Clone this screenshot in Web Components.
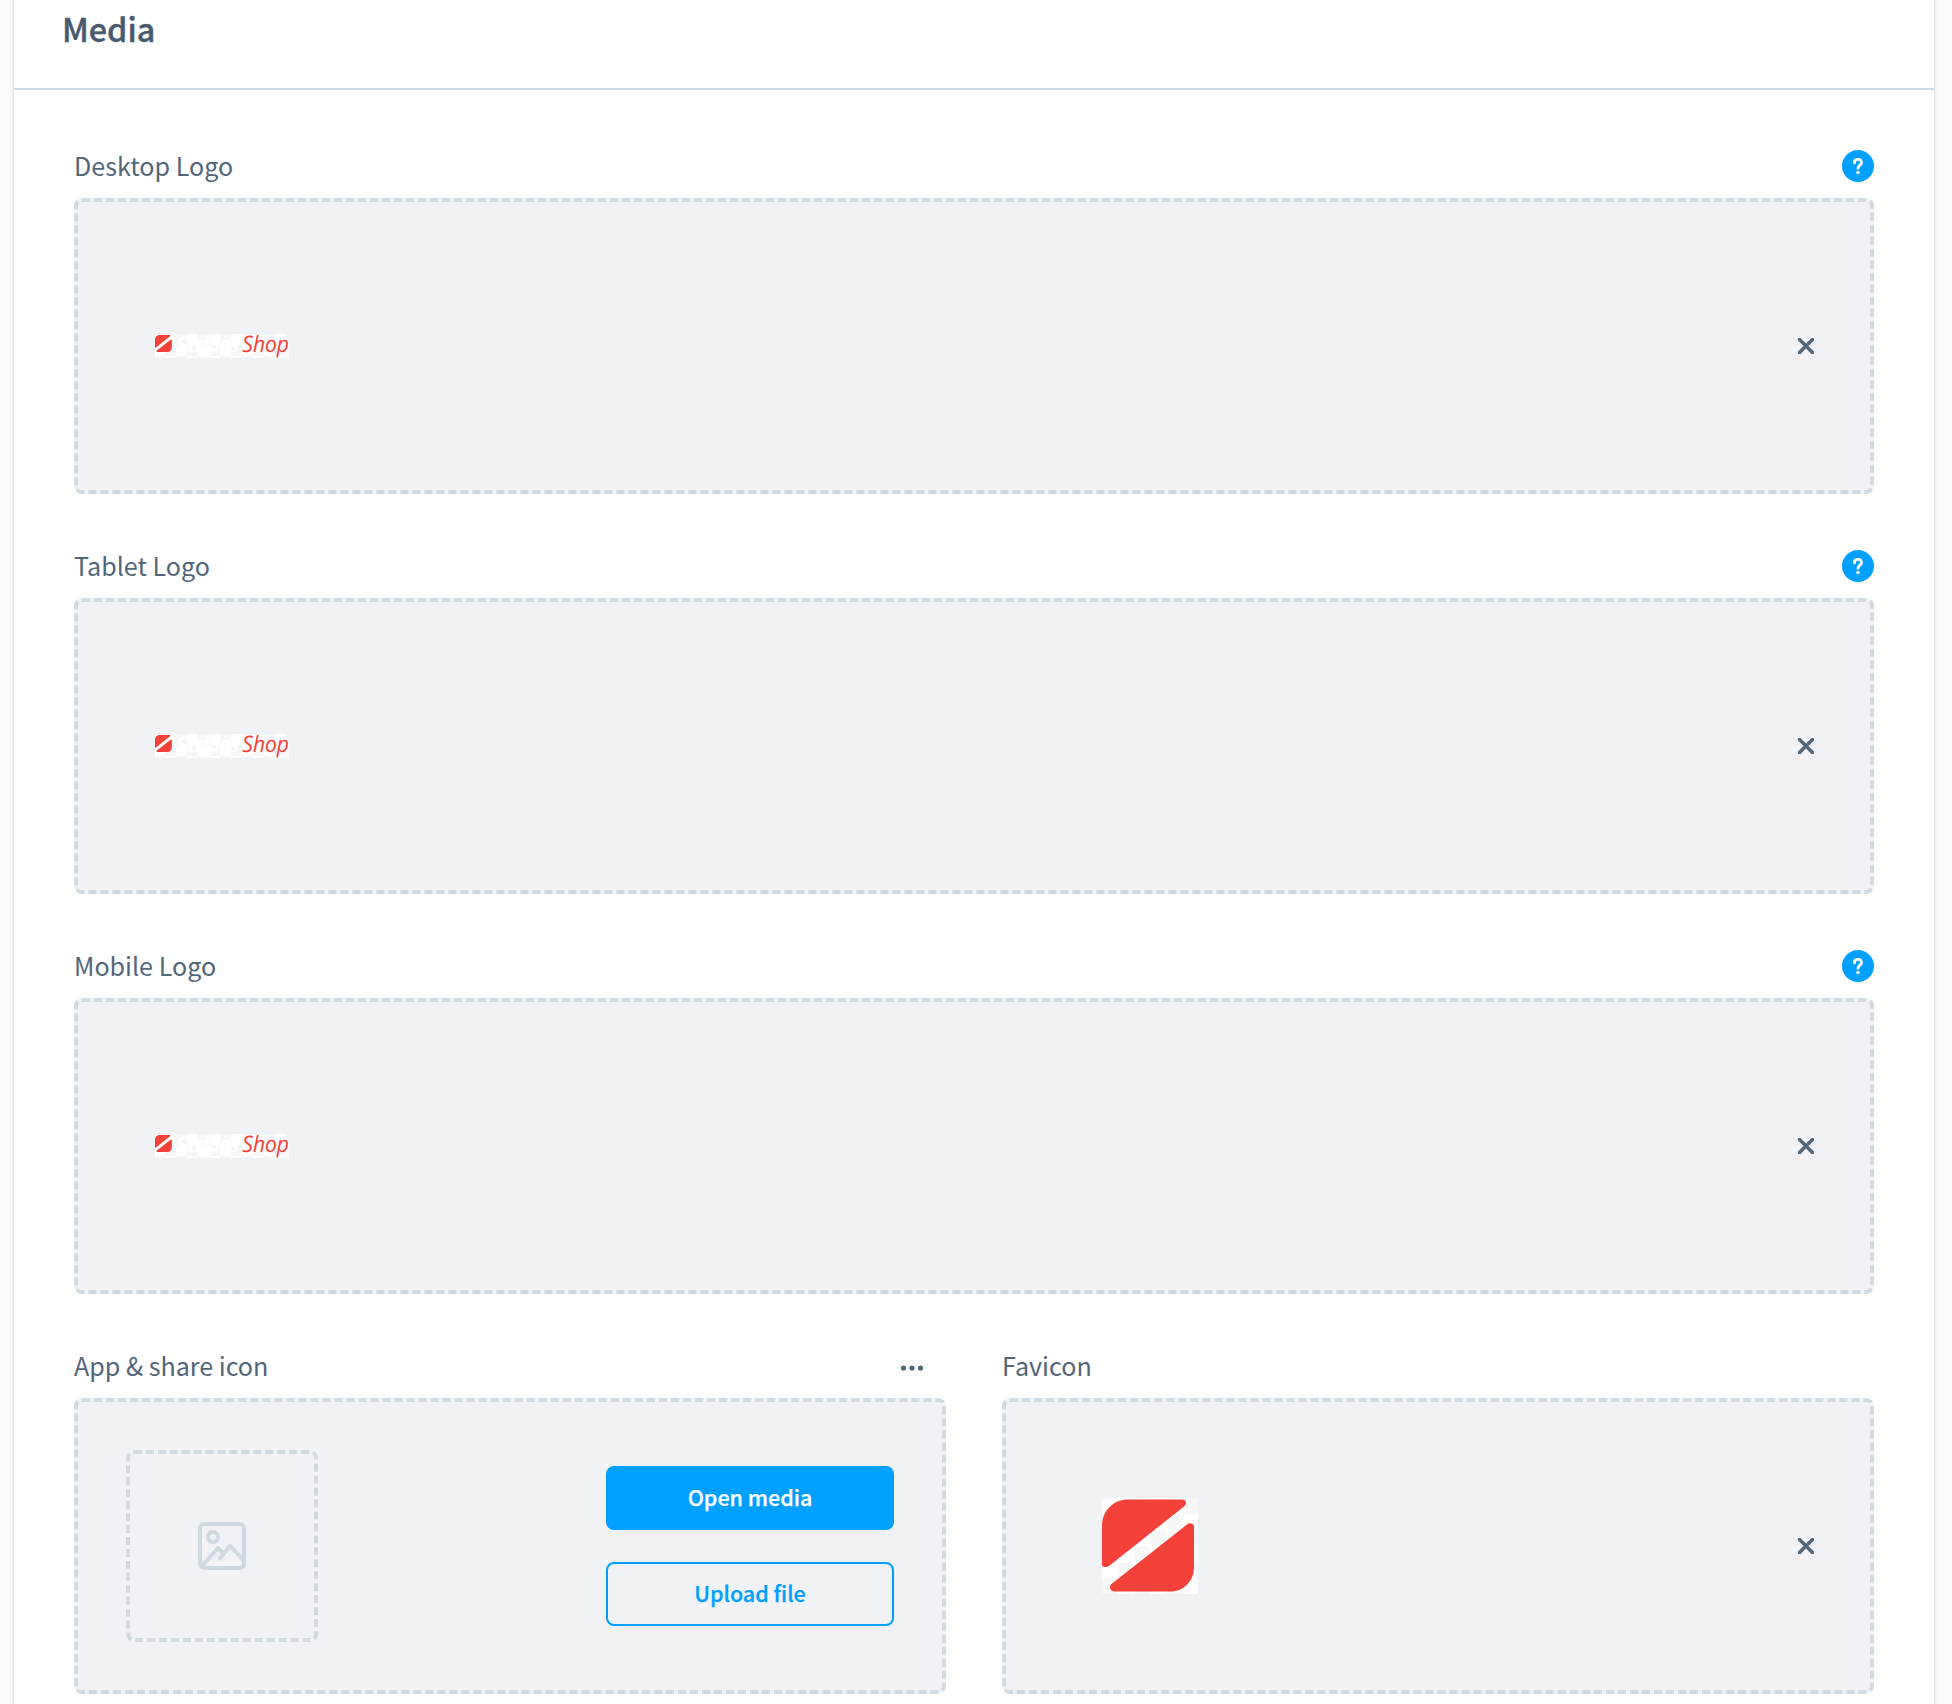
<!DOCTYPE html>
<html lang="en">
<head>
<meta charset="utf-8">
<title>Media</title>
<style>
html{height:1704px;overflow:hidden;background:#f9fafb}
body{margin:0;display:flow-root;font-family:"Noto Sans CJK JP","Noto Sans CJK SC",sans-serif;color:#52667a}
</style>
</head>
<body>
<media-card heading="Media">
  <media-field label="Desktop Logo" help><shop-logo></shop-logo></media-field>
  <media-field label="Tablet Logo" help><shop-logo></shop-logo></media-field>
  <media-field label="Mobile Logo" help><shop-logo></shop-logo></media-field>
  <field-row>
    <media-field label="App &amp; share icon" upload><empty-preview></empty-preview></media-field>
    <media-field label="Favicon"><shop-mark></shop-mark></media-field>
  </field-row>
</media-card>
<script>
const define = (name, html) => customElements.define(name, class extends HTMLElement {
  connectedCallback() {
    if (this.shadowRoot) return;
    this.attachShadow({mode: 'open'}).innerHTML = typeof html === 'function' ? html(this) : html;
  }
});
const esc = s => (s || '').replace(/&/g, '&amp;');
const MARK = '<path d="M0 26C1 12 12 1.5 26 1.5H80C84 1.5 85.500 5 82 8.500L7 68C4 70 1.500 69 0 67.500Z"/><path d="M9.500 86L85 26.500C88 24 92 25 92 29V69C92 83 82 93.500 68 93.500H13C8 93.500 6.500 89 9.500 86Z"/>';

define('media-card', el => `<style>
:host{display:flow-root;margin:-20px 18px 0 14px;padding-top:20px;height:1780px;background:#fff;box-shadow:0 2px 2px rgba(0,0,0,.08),0 4px 2px rgba(0,0,0,.06),0 2px 6px rgba(0,0,0,.1);box-sizing:border-box}
header{height:88px;border-bottom:2px solid #d1d9e0;padding-left:48px;display:flex}
h2{margin:2px 0 0;font-size:32.3px;line-height:52px;font-weight:500;color:#475a70;-webkit-text-stroke:.4px #475a70}
main{display:flex;flex-direction:column;gap:46px;padding:50px 60px}
</style><header><h2>${esc(el.getAttribute('heading'))}</h2></header><main><slot></slot></main>`);

define('field-row', `<style>:host{display:grid;grid-template-columns:1fr 1fr;gap:56px}</style><slot></slot>`);

define('help-badge', `<style>:host{display:block;width:32px;height:32px}svg{display:block}</style>
<svg width="32" height="32" viewBox="0 0 32 32"><circle cx="16" cy="16" r="16" fill="#00a0ff"/><path d="M12.500 12.900C12.500 8.400 19.500 8.200 19.500 12.700C19.500 15.300 16 15.400 16 18.200" fill="none" stroke="#fff" stroke-width="2.900" stroke-linecap="round"/><circle cx="16" cy="22.500" r="1.800" fill="#fff"/></svg>`);

define('remove-icon', `<style>:host{display:block;width:16px;height:16px}svg{display:block}</style>
<svg width="16" height="16" viewBox="0 0 16 16"><path d="M1.500 1.500L14.500 14.500M14.500 1.500L1.500 14.500" stroke="#52667a" stroke-width="3.400" stroke-linecap="round"/></svg>`);

define('more-icon', `<style>:host{display:block;margin:4px 22px 0 0}svg{display:block}</style>
<svg width="24" height="8" viewBox="0 0 24 8" fill="#52667a"><circle cx="3.500" cy="4" r="2.600"/><circle cx="12" cy="4" r="2.600"/><circle cx="20.500" cy="4" r="2.600"/></svg>`);

define('action-button', `<style>
:host{display:flex;align-items:center;justify-content:center;box-sizing:border-box;width:288px;height:64px;padding-bottom:2px;border:2px solid #00a0ff;border-radius:8px;color:#00a0ff;font-size:21.500px;line-height:32px;font-weight:500;-webkit-text-stroke:.25px currentColor}
:host([primary]){background:#00a0ff;color:#fff}
</style><slot></slot>`);

define('empty-preview', `<style>:host{display:flex;align-items:center;justify-content:center;box-sizing:border-box;width:192px;height:192px;border:4px dashed #d1d9e0;border-radius:8px}</style>
<svg width="48" height="48" viewBox="0 0 48 48" fill="none" stroke="#d1d9e0" stroke-width="4" stroke-linecap="round" stroke-linejoin="round"><rect x="2" y="2" width="44" height="44" rx="4"/><circle cx="15" cy="15" r="5"/><path d="M3.500 44.500L20 26L26 32M22 36.300L32 24L46 38.500"/></svg>`);

define('shop-mark', `<style>:host{display:block;width:96px;height:96px}svg{display:block}</style>
<svg width="96" height="96" viewBox="0 0 96 96"><defs><pattern id="c" width="32.400" height="32.400" patternUnits="userSpaceOnUse"><path fill="#f7f7f7" d="M0 16.200H16.200V32.400H0ZM16.200 0H32.400V16.200H16.200Z"/></pattern></defs><rect width="96" height="96" fill="#fff"/><rect width="96" height="96" fill="url(#c)"/><g fill="#f44139">${MARK}</g></svg>`);

define('shop-logo', `<style>:host{display:block;width:136px;height:24px}svg{display:block;overflow:visible}text{font-family:"Open Sans",sans-serif;font-style:italic;text-rendering:geometricPrecision}</style>
<svg width="136" height="24" viewBox="0 0 136 24"><defs><pattern id="c" width="22" height="22" patternUnits="userSpaceOnUse"><path fill="#fff" d="M0 11H11V22H0ZM11 0H22V11H11Z"/></pattern></defs><rect x="1" width="134" height="24" fill="#f6f7f8"/><rect x="1" width="134" height="24" fill="url(#c)"/><g fill="#f44139" transform="translate(1 .8) scale(.183)">${MARK}</g>
<text x="22.500" y="17.500" font-size="21.500" font-weight="700" fill="#fff" textLength="63" lengthAdjust="spacingAndGlyphs">Stripes</text><text x="88.300" y="17.700" font-size="22.700" fill="#f44139" textLength="46.700" lengthAdjust="spacingAndGlyphs">Shop</text></svg>`);

define('media-field', el => {
  const upload = el.hasAttribute('upload');
  return `<style>
:host{display:block}
.head{display:flex;align-items:center;justify-content:space-between;height:32px;padding:10px 0 16px}
label{font-size:25.100px;line-height:32px;white-space:nowrap;margin-top:-2px}
.box{box-sizing:border-box;height:296px;border:4px dashed #d1d9e0;border-radius:8px;background:#f0f2f5;display:flex;align-items:center;justify-content:space-between;padding:0 48px}
.preview{width:192px;height:192px;display:flex;align-items:center;justify-content:center}
.actions{display:flex;flex-direction:column;gap:32px}
remove-icon{margin-right:8px}
</style><div class="head"><label>${esc(el.getAttribute('label'))}</label>${el.hasAttribute('help') ? '<help-badge></help-badge>' : ''}${upload ? '<more-icon></more-icon>' : ''}</div>
<div class="box"><div class="preview"><slot></slot></div>${upload ? '<div class="actions"><action-button primary>Open media</action-button><action-button>Upload file</action-button></div>' : '<remove-icon></remove-icon>'}</div>`;
});
</script>
</body>
</html>
